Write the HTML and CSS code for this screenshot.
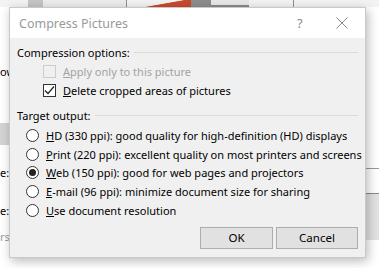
FILE: index.html
```html
<!DOCTYPE html>
<html>
<head>
<meta charset="utf-8">
<title>Compress Pictures</title>
<link rel="stylesheet" href="styles.css">
</head>
<body>
<div class="app">
  <div class="ribbon">
    <span class="rb rb-a"></span>
    <span class="rb rb-b"></span>
    <span class="rb rb-red"></span>
    <span class="rb rb-c"></span>
    <span class="rb rb-d"></span>
    <span class="rb rb-e"></span>
  </div>
  <div class="side side-left">
    <span class="lbl lbl-ow">ow</span>
    <span class="band"></span>
    <span class="lbl lbl-e1">e:</span>
    <span class="lbl lbl-e2">e:</span>
    <span class="lbl lbl-rs">rs:</span>
  </div>
  <div class="side side-right">
    <span class="rline"></span>
    <span class="rband"></span>
  </div>
</div>

<div class="dialog">
  <div class="titlebar">
    <span class="title">Compress Pictures</span>
    <span class="help">?</span>
    <svg class="close" width="12" height="12" viewBox="0 0 12 12"><path d="M0.5 0.5 L11.5 11.5 M11.5 0.5 L0.5 11.5" stroke="#8a8a8a" stroke-width="1" fill="none"/></svg>
  </div>
  <div class="body">
    <div class="group">
      <span>Compression options:</span><span class="rule"></span>
    </div>
    <div class="option disabled">
      <span class="check"></span>
      <span><u>A</u>pply only to this picture</span>
    </div>
    <div class="option">
      <span class="check"><svg width="11" height="11" viewBox="0 0 11 11"><path d="M1 5.5 L4 8.5 L10 1.5" stroke="#222" stroke-width="1.2" fill="none"/></svg></span>
      <span><u>D</u>elete cropped areas of pictures</span>
    </div>
    <div class="group group-2">
      <span>Target output:</span><span class="rule"></span>
    </div>
    <div class="radios">
      <div class="radio"><span class="dot"></span><span><u>H</u>D (330 ppi): good quality for high-definition (HD) displays</span></div>
      <div class="radio"><span class="dot"></span><span><u>P</u>rint (220 ppi): excellent quality on most printers and screens</span></div>
      <div class="radio on"><span class="dot"></span><span><u>W</u>eb (150 ppi): good for web pages and projectors</span></div>
      <div class="radio"><span class="dot"></span><span><u>E</u>-mail (96 ppi): minimize document size for sharing</span></div>
      <div class="radio"><span class="dot"></span><span><u>U</u>se document resolution</span></div>
    </div>
    <div class="buttons">
      <span class="btn">OK</span>
      <span class="btn btn-cancel">Cancel</span>
    </div>
  </div>
</div>
</body>
</html>
```

FILE: styles.css
```css
html, body {
	margin: 0;
	padding: 0;
}
body {
	width: 379px;
	height: 268px;
	overflow: hidden;
	background: #ffffff;
	font-family: "Noto Sans", "Open Sans", sans-serif;
	font-size: 11px;
	color: #000;
	position: relative;
}

/* application behind the dialog */
.app {
	width: 379px;
	height: 268px;
	position: relative;
}
.ribbon {
	height: 7px;
	display: flex;
	background: #f3f3f3;
}
.rb {
	height: 7px;
	display: block;
}
.rb-a {
	margin-left: 28px;
	width: 15px;
	background: #c4c4c4;
}
.rb-b {
	width: 83px;
	background: #ececec;
	border-right: 1px solid #8f8f8f;
}
.rb-red {
	margin-left: 16px;
	width: 48px;
	background: linear-gradient(170deg, transparent 45%, #c8492e 50%);
}
.rb-c {
	width: 20px;
	background: #8d8d8d;
}
.rb-d {
	width: 38px;
	background: #e8e8e8;
	border-bottom: 2px solid #8a8a8a;
	box-sizing: border-box;
}
.rb-e {
	margin-left: 44px;
	width: 1px;
	background: #8d8d8d;
}
.side {
	position: absolute;
	top: 7px;
	bottom: 0;
}
.side-left {
	left: 0;
	width: 12px;
}
.lbl {
	position: absolute;
	left: 0;
	font-size: 11px;
	line-height: 14px;
	white-space: nowrap;
}
.lbl-ow { top: 58px; }
.lbl-e1 { top: 159px; }
.lbl-e2 { top: 197px; }
.lbl-rs { top: 223px; color: #9a9a9a; }
.band {
	position: absolute;
	left: 0;
	right: 0;
	top: 116px;
	height: 22px;
	background: #d4d4d4;
}
.side-right {
	left: 365px;
	right: 0;
}
.rline {
	position: absolute;
	left: 0;
	right: 0;
	top: 161px;
	border-top: 1px solid #9a9a9a;
}
.rband {
	position: absolute;
	left: 0;
	right: 0;
	top: 186px;
	height: 46px;
	border-top: 1px solid #8a8a8a;
	background: #e2e2e2;
}

/* dialog */
.dialog {
	position: absolute;
	left: 9px;
	top: 7px;
	width: 357px;
	height: 251px;
	box-sizing: border-box;
	border: 1px solid #c9c9c9;
	background: #f0f0f0;
	box-shadow: 2px 3px 10px rgba(0, 0, 0, 0.28);
	display: flex;
	flex-direction: column;
}
.titlebar {
	height: 30px;
	flex-shrink: 0;
	background: #ffffff;
	display: flex;
	align-items: center;
	padding: 0 0 0 9px;
}
.title {
	color: #999999;
	font-size: 12.5px;
	flex: 1;
}
.help {
	color: #8a8a8a;
	font-size: 13px;
	width: 12px;
	margin-right: 27px;
}
.close {
	margin-right: 17px;
}
.body {
	flex: 1;
	padding: 6px 7px 0 7px;
	display: flex;
	flex-direction: column;
}
.group {
	display: flex;
	align-items: center;
	height: 16px;
}
.group-2 {
	margin-top: 7px;
}
.rule {
	flex: 1;
	margin-left: 4px;
	border-top: 1px solid #dadada;
}
.option {
	display: flex;
	align-items: center;
	height: 19px;
	padding-left: 26px;
}
.option .check {
	flex-shrink: 0;
	width: 13px;
	height: 13px;
	box-sizing: border-box;
	border: 1px solid #333;
	background: #fff;
	margin-right: 7px;
	display: flex;
	align-items: center;
	justify-content: center;
}
.option.disabled {
	color: #a3a3a3;
	margin-top: 2px;
}
.option.disabled .check {
	border-color: #cccccc;
	background: #f0f0f0;
}
.radios {
	margin-top: 3px;
	display: flex;
	flex-direction: column;
}
.radio {
	display: flex;
	align-items: center;
	height: 18.75px;
	padding-left: 9px;
	white-space: nowrap;
}
.radio .dot {
	flex-shrink: 0;
	width: 13px;
	height: 13px;
	box-sizing: border-box;
	border: 1px solid #333;
	border-radius: 50%;
	background: #fff;
	margin-right: 7px;
	display: flex;
	align-items: center;
	justify-content: center;
}
.radio.on .dot::after {
	content: "";
	width: 7px;
	height: 7px;
	border-radius: 50%;
	background: #222;
}
.buttons {
	display: flex;
	justify-content: flex-end;
	gap: 3px;
	margin-top: 7px;
}
.btn {
	width: 73px;
	height: 22px;
	box-sizing: border-box;
	border: 1px solid #adadad;
	background: #e1e1e1;
	display: flex;
	align-items: center;
	justify-content: center;
	font-size: 11.5px;
}
.btn-cancel {
	width: 82px;
}
```
